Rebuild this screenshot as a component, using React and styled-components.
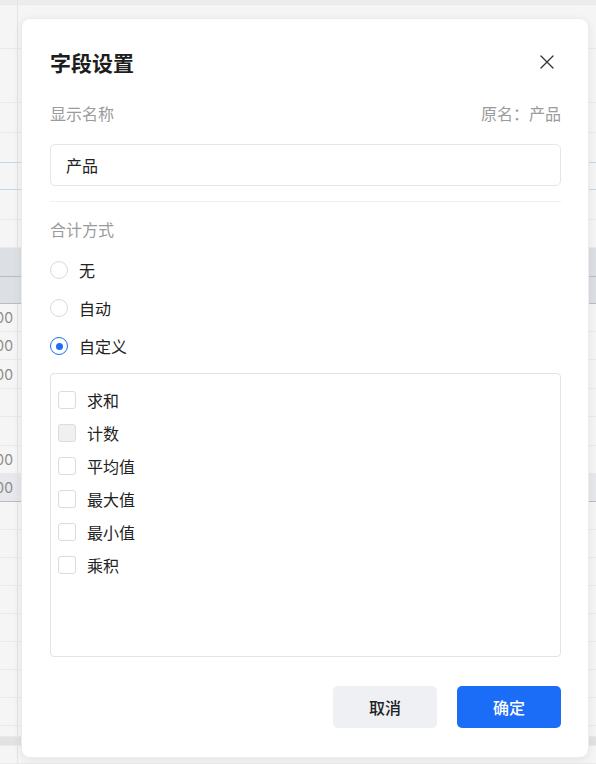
import React, { useState } from "react";
import styled, { createGlobalStyle } from "styled-components";

const GlobalStyle = createGlobalStyle`
  html, body {
    margin: 0;
    padding: 0;
  }
  body {
    font-family: "Noto Sans CJK SC", "Noto Sans", "Liberation Sans", sans-serif;
    color: #222;
  }
  * {
    box-sizing: border-box;
  }
`;

const sheetRows = [
  { h: 5, bg: "#ececec" },
  { h: 44 },
  { h: 54 },
  { h: 30 },
  { h: 30, line: "#c9d4f2" },
  { h: 27, line: "#c9d4f2" },
  { h: 30 },
  { h: 28 },
  { h: 29, bg: "#dcdfe4", line: "#b9bcc1" },
  { h: 27, bg: "#dcdfe4", line: "#b9bcc1" },
  { h: 28, text: "00" },
  { h: 28, text: "00" },
  { h: 29, text: "00" },
  { h: 28 },
  { h: 29 },
  { h: 28, text: "00" },
  { h: 28, text: "00", bg: "#e6e8eb", line: "#b9bcc1" },
  { h: 28 },
  { h: 28 },
  { h: 28 },
  { h: 28 },
  { h: 28 },
  { h: 28 },
  { h: 28 },
  { h: 28 },
  { h: 11 },
  { h: 9, bg: "#e2e2e2" },
  { h: 18 },
];

const sums = [
  { id: "sum", label: "求和" },
  { id: "count", label: "计数", disabled: true },
  { id: "avg", label: "平均值" },
  { id: "max", label: "最大值" },
  { id: "min", label: "最小值" },
  { id: "product", label: "乘积" },
];

const modes = [
  { id: "none", label: "无" },
  { id: "auto", label: "自动" },
  { id: "custom", label: "自定义" },
];

const CloseIcon = () => (
  <svg width="14" height="14" viewBox="0 0 14 14" fill="none">
    <path d="M1 1L13 13M13 1L1 13" stroke="#333" strokeWidth="1.3" strokeLinecap="round" />
  </svg>
);

export default function App() {
  const [name, setName] = useState("产品");
  const [mode, setMode] = useState("custom");
  const [checked, setChecked] = useState({});

  return (
    <Page>
      <GlobalStyle />
      <Sheet>
        {sheetRows.map((row, i) => (
          <SheetRow key={i} $h={row.h} $bg={row.bg} $line={row.line}>
            <SheetCell>{row.text}</SheetCell>
          </SheetRow>
        ))}
      </Sheet>

      <Backdrop>
        <Modal>
          <Header>
            <Title>字段设置</Title>
            <CloseButton type="button" aria-label="关闭">
              <CloseIcon />
            </CloseButton>
          </Header>

          <LabelRow>
            <Label>显示名称</Label>
            <Label>原名：产品</Label>
          </LabelRow>
          <Input value={name} onChange={(e) => setName(e.target.value)} />

          <Divider />

          <SectionLabel>合计方式</SectionLabel>
          <RadioList>
            {modes.map((m) => (
              <RadioRow key={m.id} onClick={() => setMode(m.id)}>
                <RadioDot $on={mode === m.id} />
                <span>{m.label}</span>
              </RadioRow>
            ))}
          </RadioList>

          <CheckPanel>
            {sums.map((s) => (
              <CheckRow
                key={s.id}
                onClick={() =>
                  !s.disabled && setChecked({ ...checked, [s.id]: !checked[s.id] })
                }
              >
                <CheckBox $disabled={s.disabled} $on={checked[s.id]} />
                <span>{s.label}</span>
              </CheckRow>
            ))}
          </CheckPanel>

          <Footer>
            <Button type="button">取消</Button>
            <Button type="button" $primary>
              确定
            </Button>
          </Footer>
        </Modal>
      </Backdrop>
    </Page>
  );
}

const Page = styled.div`
  position: relative;
  width: 596px;
  height: 764px;
  overflow: hidden;
  background: #f4f4f4;
`;

const Sheet = styled.div`
  display: flex;
  flex-direction: column;
  width: 100%;
`;

const SheetRow = styled.div`
  height: ${(p) => p.$h}px;
  background: ${(p) => p.$bg || "#f5f5f5"};
  border-bottom: 1px solid ${(p) => p.$line || "#e9e9e9"};
  display: flex;
`;

const SheetCell = styled.div`
  width: 18px;
  border-right: 1px solid #e3e3e3;
  display: flex;
  align-items: center;
  justify-content: flex-end;
  padding-right: 4px;
  overflow: hidden;
  font-family: "Inter", "Liberation Sans", sans-serif;
  font-size: 14px;
  color: #8a8a8a;
  white-space: nowrap;
`;

const Backdrop = styled.div`
  position: absolute;
  inset: 0;
  padding: 18px 7px 7px 21px;
  display: flex;
  align-items: flex-start;
`;

const Modal = styled.div`
  width: 568px;
  height: 740px;
  background: #fff;
  border-radius: 9px;
  border: 1px solid #ececec;
  box-shadow: 0 2px 10px rgba(0, 0, 0, 0.07);
  padding: 29px 27px 29px 28px;
  display: flex;
  flex-direction: column;
`;

const Header = styled.div`
  height: 28px;
  display: flex;
  align-items: center;
  justify-content: space-between;
`;

const Title = styled.h2`
  margin: 0;
  font-size: 21px;
  font-weight: 600;
  line-height: 28px;
  color: #1d1d1d;
`;

const CloseButton = styled.button`
  border: none;
  background: none;
  padding: 0;
  margin-right: 7px;
  width: 14px;
  height: 14px;
  display: flex;
  cursor: pointer;
`;

const LabelRow = styled.div`
  margin-top: 26px;
  display: flex;
  justify-content: space-between;
`;

const Label = styled.span`
  font-size: 16px;
  line-height: 22px;
  color: #9b9b9b;
`;

const Input = styled.input`
  margin-top: 20px;
  height: 42px;
  width: 100%;
  border: 1px solid #e6e6e6;
  border-radius: 5px;
  padding: 0 15px;
  font-family: inherit;
  font-size: 16px;
  color: #222;
  outline: none;
`;

const Divider = styled.div`
  margin-top: 15px;
  height: 1px;
  background: #f0f0f0;
`;

const SectionLabel = styled(Label)`
  margin-top: 16px;
  display: block;
`;

const RadioList = styled.div`
  margin-top: 11px;
  display: flex;
  flex-direction: column;
`;

const RadioRow = styled.label`
  height: 38px;
  display: flex;
  align-items: center;
  gap: 11px;
  font-size: 16px;
  color: #222;
  cursor: pointer;
`;

const RadioDot = styled.span`
  width: 18px;
  height: 18px;
  border-radius: 50%;
  border: 1px solid ${(p) => (p.$on ? "#1a6ef7" : "#dadada")};
  display: flex;
  align-items: center;
  justify-content: center;
  &::after {
    content: "";
    width: 7px;
    height: 7px;
    border-radius: 50%;
    background: ${(p) => (p.$on ? "#1a6ef7" : "transparent")};
  }
`;

const CheckPanel = styled.div`
  margin-top: 8px;
  height: 284px;
  border: 1px solid #e3e3e3;
  border-radius: 4px;
  padding: 9px 7px;
  display: flex;
  flex-direction: column;
`;

const CheckRow = styled.label`
  height: 33px;
  display: flex;
  align-items: center;
  gap: 11px;
  font-size: 16px;
  color: #222;
  cursor: pointer;
`;

const CheckBox = styled.span`
  width: 18px;
  height: 18px;
  border-radius: 3px;
  border: 1px solid #dcdcdc;
  background: ${(p) => (p.$disabled ? "#f0f0f0" : p.$on ? "#1a6ef7" : "#fff")};
`;

const Footer = styled.div`
  margin-top: auto;
  display: flex;
  justify-content: flex-end;
  gap: 20px;
`;

const Button = styled.button`
  width: 104px;
  height: 42px;
  border: none;
  border-radius: 5px;
  font-family: inherit;
  font-size: 16px;
  font-weight: 500;
  cursor: pointer;
  background: ${(p) => (p.$primary ? "#1b6df8" : "#eef0f3")};
  color: ${(p) => (p.$primary ? "#fff" : "#222")};
`;
